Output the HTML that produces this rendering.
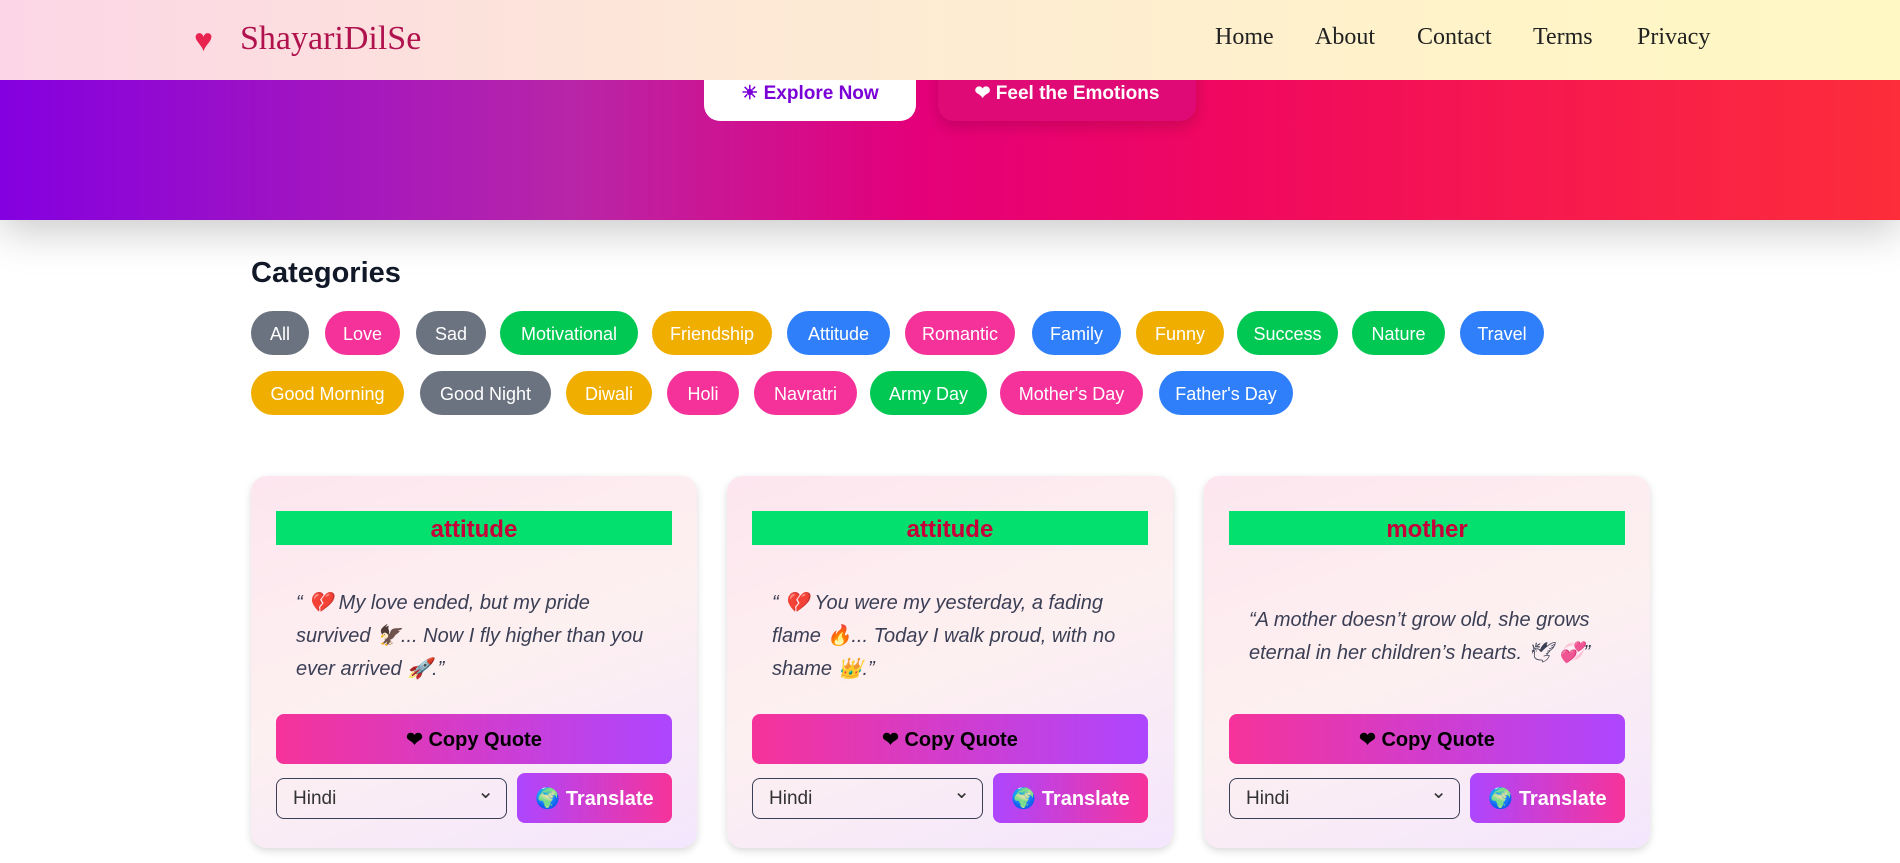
<!DOCTYPE html>
<html><head><meta charset="utf-8"><style>
*{box-sizing:border-box;margin:0;padding:0}
body{width:1900px;height:863px;overflow:hidden;background:#fff;font-family:"Liberation Sans",sans-serif;position:relative}
.hero{position:absolute;left:0;top:0;width:1900px;height:220px;background:linear-gradient(90deg,#8400e0 0%,#b825a8 30%,#e4007a 48%,#f0085f 65%,#fd2d3a 100%);box-shadow:0 10px 40px rgba(0,0,0,.22)}
.hdr{position:absolute;left:0;top:0;width:1900px;height:80px;background:linear-gradient(90deg,#fcd6e6,#fde9d6 40%,#fff4c8 80%,#fff8c4);z-index:2}
.logo{position:absolute;left:240px;top:20px;font-family:"Liberation Serif",serif;font-size:34px;color:#b0124e}
.logoi{position:absolute;left:194px;top:22px;font-size:32px;color:#e8234f}
.nav{position:absolute;top:24px;font-family:"Liberation Serif",serif;font-size:24px;color:#222}
.btn{position:absolute;top:56px;height:65px;border-radius:0 0 16px 16px;font-weight:bold;font-size:19px;padding-top:26px;text-align:center}
h2{position:absolute;left:251px;top:257px;font-size:29px;color:#111827;font-weight:bold}
.pills{position:absolute;left:251px;width:1400px}
.p{position:absolute;height:44px;border-radius:22px;color:#fff;font-size:18px;line-height:46px;text-align:center}
.g{background:#6b7280}.k{background:#f4329a}.n{background:#00c853}.y{background:#f0ae00}.b{background:#2f7ffa}
.card{position:absolute;top:476px;width:446px;height:372px;border-radius:16px;background:linear-gradient(160deg,#fde6ef,#fdf0f0 50%,#f4e6fd);box-shadow:0 3px 8px rgba(0,0,0,.15)}
.tb{position:absolute;left:25px;top:35px;width:396px;height:34px;background:#04e06e;color:#c8003a;font-weight:bold;font-size:24px;text-align:center;line-height:38px}
.q{position:absolute;left:45px;width:360px;font-style:italic;font-size:20px;line-height:33px;color:#3b3f55}
.cp{position:absolute;left:25px;top:238px;width:396px;height:50px;border-radius:8px;background:linear-gradient(90deg,#f6339a,#ad46ff);color:#000;font-weight:bold;font-size:20px;text-align:center;line-height:52px}
.sel{position:absolute;left:25px;top:302px;width:231px;height:41px;border:1.5px solid #3b3f55;border-radius:8px;font-size:19px;color:#333;padding:9px 0 0 16px}
.sel:after{content:"⌄";position:absolute;right:12px;top:0px;font-size:20px}
.tr{position:absolute;left:266px;top:297px;width:155px;height:50px;border-radius:8px;background:linear-gradient(90deg,#ad46ff,#f6339a);color:#fff;font-weight:bold;font-size:20px;text-align:center;line-height:52px}
</style></head><body>
<div class="hero">
<div class="btn" style="left:704px;width:212px;background:#fff;color:#7a00d6">☀ Explore Now</div>
<div class="btn" style="left:938px;width:258px;background:#e00a76;color:#fff;box-shadow:0 6px 14px rgba(0,0,0,.15)">❤ Feel the Emotions</div>
</div>
<div class="hdr">
<div class="logoi">♥</div>
<div class="logo">ShayariDilSe</div>
<div class="nav" style="left:1215px">Home</div>
<div class="nav" style="left:1315px">About</div>
<div class="nav" style="left:1417px">Contact</div>
<div class="nav" style="left:1533px">Terms</div>
<div class="nav" style="left:1637px">Privacy</div>
</div>
<h2>Categories</h2>
<div class="pills" style="top:311px">
<div class="p g" style="left:0;width:58px">All</div>
<div class="p k" style="left:74px;width:75px">Love</div>
<div class="p g" style="left:165px;width:70px">Sad</div>
<div class="p n" style="left:249px;width:138px">Motivational</div>
<div class="p y" style="left:401px;width:120px">Friendship</div>
<div class="p b" style="left:536px;width:103px">Attitude</div>
<div class="p k" style="left:654px;width:110px">Romantic</div>
<div class="p b" style="left:781px;width:89px">Family</div>
<div class="p y" style="left:885px;width:88px">Funny</div>
<div class="p n" style="left:986px;width:101px">Success</div>
<div class="p n" style="left:1101px;width:93px">Nature</div>
<div class="p b" style="left:1209px;width:84px">Travel</div>
</div>
<div class="pills" style="top:371px">
<div class="p y" style="left:0;width:153px">Good Morning</div>
<div class="p g" style="left:169px;width:131px">Good Night</div>
<div class="p y" style="left:315px;width:86px">Diwali</div>
<div class="p k" style="left:416px;width:72px">Holi</div>
<div class="p k" style="left:503px;width:103px">Navratri</div>
<div class="p n" style="left:619px;width:117px">Army Day</div>
<div class="p k" style="left:749px;width:143px">Mother's Day</div>
<div class="p b" style="left:908px;width:134px">Father's Day</div>
</div>
<div class="card" style="left:251px"><div class="tb">attitude</div>
<div class="q" style="top:111px">“ 💔 My love ended, but my pride survived 🦅... Now I fly higher than you ever arrived 🚀.”</div>
<div class="cp">❤ Copy Quote</div><div class="sel">Hindi</div><div class="tr">🌍 Translate</div></div>
<div class="card" style="left:727px"><div class="tb">attitude</div>
<div class="q" style="top:111px">“ 💔 You were my yesterday, a fading flame 🔥... Today I walk proud, with no shame 👑.”</div>
<div class="cp">❤ Copy Quote</div><div class="sel">Hindi</div><div class="tr">🌍 Translate</div></div>
<div class="card" style="left:1204px"><div class="tb">mother</div>
<div class="q" style="top:128px;width:370px">“A mother doesn’t grow old, she grows eternal in her children’s hearts. 🕊 💞”</div>
<div class="cp">❤ Copy Quote</div><div class="sel">Hindi</div><div class="tr">🌍 Translate</div></div>
</body></html>
